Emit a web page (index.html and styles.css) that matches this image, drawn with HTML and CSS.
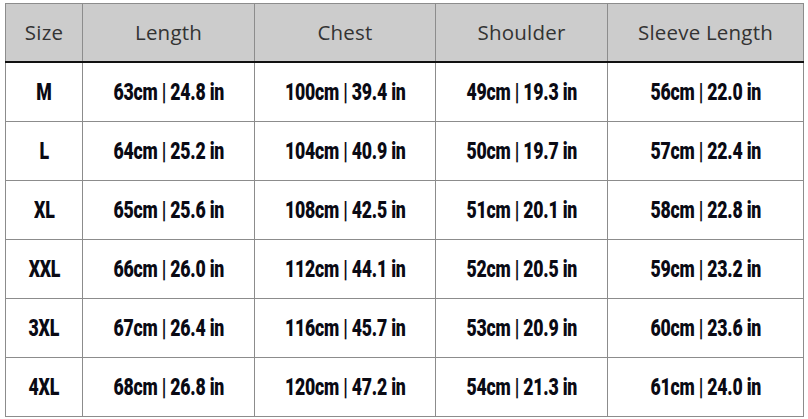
FILE: index.html
```html
<!DOCTYPE html>
<html>
<head>
<meta charset="utf-8">
<link rel="stylesheet" href="styles.css">
</head>
<body>
<table class="size-table">
  <colgroup>
    <col class="c1"><col class="c2"><col class="c3"><col class="c4"><col class="c5">
  </colgroup>
  <thead>
    <tr><th>Size</th><th>Length</th><th>Chest</th><th>Shoulder</th><th>Sleeve Length</th></tr>
  </thead>
  <tbody>
    <tr><td><span class="v">M</span></td><td><span class="v">63cm | 24.8 in</span></td><td><span class="v">100cm | 39.4 in</span></td><td><span class="v">49cm | 19.3 in</span></td><td><span class="v">56cm | 22.0 in</span></td></tr>
    <tr><td><span class="v">L</span></td><td><span class="v">64cm | 25.2 in</span></td><td><span class="v">104cm | 40.9 in</span></td><td><span class="v">50cm | 19.7 in</span></td><td><span class="v">57cm | 22.4 in</span></td></tr>
    <tr><td><span class="v">XL</span></td><td><span class="v">65cm | 25.6 in</span></td><td><span class="v">108cm | 42.5 in</span></td><td><span class="v">51cm | 20.1 in</span></td><td><span class="v">58cm | 22.8 in</span></td></tr>
    <tr><td><span class="v">XXL</span></td><td><span class="v">66cm | 26.0 in</span></td><td><span class="v">112cm | 44.1 in</span></td><td><span class="v">52cm | 20.5 in</span></td><td><span class="v">59cm | 23.2 in</span></td></tr>
    <tr><td><span class="v">3XL</span></td><td><span class="v">67cm | 26.4 in</span></td><td><span class="v">116cm | 45.7 in</span></td><td><span class="v">53cm | 20.9 in</span></td><td><span class="v">60cm | 23.6 in</span></td></tr>
    <tr><td><span class="v">4XL</span></td><td><span class="v">68cm | 26.8 in</span></td><td><span class="v">120cm | 47.2 in</span></td><td><span class="v">54cm | 21.3 in</span></td><td><span class="v">61cm | 24.0 in</span></td></tr>
  </tbody>
</table>
</body>
</html>
```
FILE: styles.css
```css
html, body {
  margin: 0;
  padding: 0;
  background: #ffffff;
}
body {
  padding: 3px 0 0 5px;
}
.size-table {
  border-collapse: collapse;
  table-layout: fixed;
  width: 798px;
}
.c1 { width: 77px; }
.c2 { width: 172px; }
.c3 { width: 181px; }
.c4 { width: 172px; }
.c5 { width: 196px; }
.size-table th,
.size-table td {
  border: 1px solid #8c8c8c;
  text-align: center;
  vertical-align: middle;
  padding: 0;
}
.size-table th {
  background: #cccccc;
  height: 55px;
  padding-bottom: 2px;
  font-family: "Open Sans", "Noto Sans", sans-serif;
  font-weight: 400;
  font-size: 20.5px;
  color: #333333;
  border-bottom: 2px solid #111111;
  letter-spacing: 0.2px;
}
.size-table td {
  height: 58px;
  font-family: Roboto, "Liberation Sans", sans-serif;
  font-weight: 900;
  font-size: 23px;
  color: #0a0a14;
  white-space: nowrap;
}
.v {
  display: inline-block;
  transform: scaleX(0.77);
  letter-spacing: -0.3px;
}
```
